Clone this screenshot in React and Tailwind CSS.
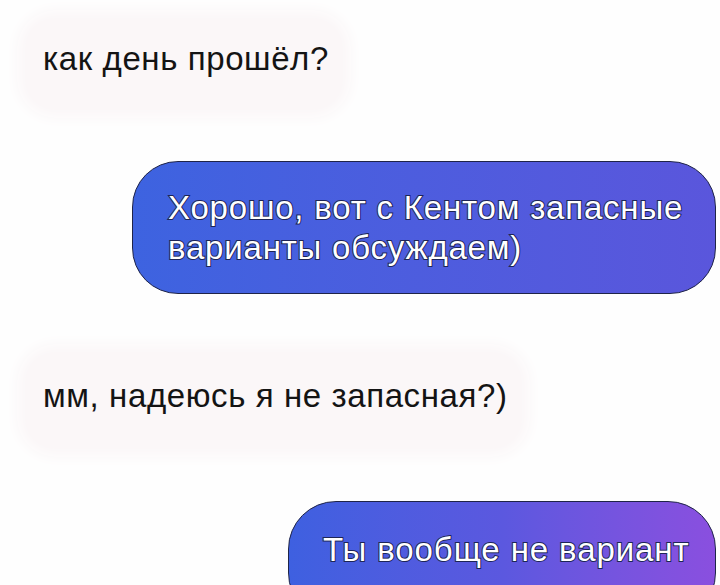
import React from 'react';

const font = "font-['Liberation_Sans','Arial',sans-serif]";
const outline = "[-webkit-text-stroke:2px_#1d2556] [paint-order:stroke_fill]";

const Incoming = ({ text, className }) => (
  <div
    className={`self-start shrink-0 ml-[25px] rounded-[30px] bg-[#fbf7f8] shadow-[0_0_14px_8px_#fbf7f8] pl-[18px] pr-[14px] ${className}`}
  >
    <span className="text-[33px] leading-[33px] tracking-[0.6px] text-[#141414] whitespace-nowrap">{text}</span>
  </div>
);

const ChatScreen = () => {
  return (
    <div className={`w-[720px] h-[585px] overflow-hidden bg-[#fefefe] flex flex-col pt-[18px] ${font}`}>
      <Incoming text="как день прошёл?" className="pt-[24px] pb-[33px]" />

      <div className="self-end shrink-0 mr-[4px] mt-[51px] w-[584px] h-[133px] rounded-[46px] border border-[#1f2448] bg-linear-to-r from-[#3d63e0] to-[#5a56dc] pl-[35px] pt-[26px]">
        <p className={`text-[33px] leading-[40px] tracking-[0.8px] text-white whitespace-nowrap ${outline}`}>
          Хорошо, вот с Кентом запасные
          <br />
          варианты обсуждаем)
        </p>
      </div>

      <Incoming text="мм, надеюсь я не запасная?)" className="mt-[58px] pt-[27px] pb-[35px]" />

      <div className="self-end shrink-0 mr-[4px] mt-[52px] w-[428px] h-[120px] rounded-[48px] border border-[#1f2448] bg-linear-to-r from-[#3e60e0] via-[#5b58df] to-[#8a4fdf] pl-[34px] pt-[31px]">
        <p className={`text-[33px] leading-[33px] tracking-[0.9px] text-white whitespace-nowrap ${outline}`}>
          Ты вообще не вариант
        </p>
      </div>
    </div>
  );
};

export default function App() {
  return <ChatScreen />;
}
